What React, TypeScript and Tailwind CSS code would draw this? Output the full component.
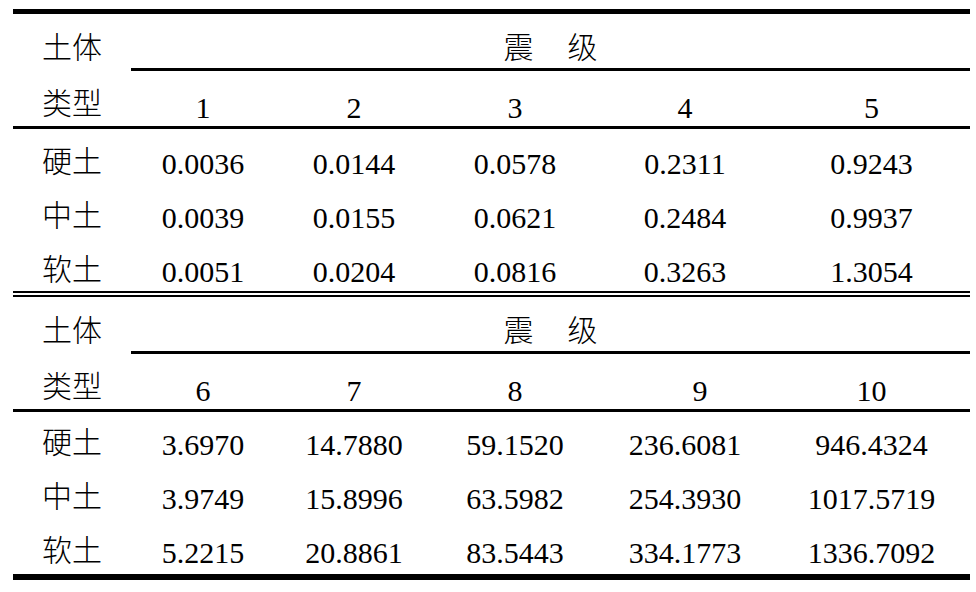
const font = { fontFamily: '"Liberation Serif", "Noto Sans CJK SC", serif' };

type Block = {
  heads: string[];
  rows: { label: string; values: string[] }[];
  headPad: string[];
  bodyTop: string;
  bodyBottom: string;
};

const blocks: Block[] = [
  {
    heads: ["1", "2", "3", "4", "5"],
    headPad: ["", "", "", "", ""],
    rows: [
      { label: "硬土", values: ["0.0036", "0.0144", "0.0578", "0.2311", "0.9243"] },
      { label: "中土", values: ["0.0039", "0.0155", "0.0621", "0.2484", "0.9937"] },
      { label: "软土", values: ["0.0051", "0.0204", "0.0816", "0.3263", "1.3054"] },
    ],
    bodyTop: "pt-[20px]",
    bodyBottom: "pb-[4px]",
  },
  {
    heads: ["6", "7", "8", "9", "10"],
    headPad: ["", "", "", "pl-[30px]", ""],
    rows: [
      { label: "硬土", values: ["3.6970", "14.7880", "59.1520", "236.6081", "946.4324"] },
      { label: "中土", values: ["3.9749", "15.8996", "63.5982", "254.3930", "1017.5719"] },
      { label: "软土", values: ["5.2215", "20.8861", "83.5443", "334.1773", "1336.7092"] },
    ],
    bodyTop: "pt-[18px]",
    bodyBottom: "pb-[6px]",
  },
];

const cols = "grid grid-cols-[118px_144px_158px_164px_176px_197px]";

function Section({ block }: { block: Block }) {
  return (
    <div>
      {/* header row: 土体 / 震 级 */}
      <div className={cols}>
        <div className="flex justify-center pt-[19px] h-[57px] leading-[30px] font-light">土体</div>
        <div className="col-span-5 flex justify-center gap-[34px] pt-[19px] h-[57px] leading-[30px] border-b-[3px] border-black font-light">
          <span>震</span>
          <span>级</span>
        </div>
      </div>
      {/* header row: 类型 / numbers */}
      <div className={`${cols} border-b-[3px] border-black`}>
        <div className="flex justify-center pt-[18px] h-[55px] leading-[30px] font-light">类型</div>
        {block.heads.map((h, i) => (
          <div key={h} className={`flex justify-center pt-[22px] h-[55px] leading-[30px] ${block.headPad[i]}`}>
            {h}
          </div>
        ))}
      </div>
      {/* data rows */}
      <div className={`flex flex-col gap-[24px] ${block.bodyTop} ${block.bodyBottom}`}>
        {block.rows.map((r) => (
          <div key={r.label} className={`${cols} h-[30px] leading-[30px]`}>
            <div className="flex justify-center -translate-y-[2px] font-light">{r.label}</div>
            {r.values.map((v, i) => (
              <div key={i} className="flex justify-center">
                {v}
              </div>
            ))}
          </div>
        ))}
      </div>
    </div>
  );
}

export default function App() {
  return (
    <div className="w-[976px] h-[592px] bg-white text-black text-[30px] pt-[9px] pl-[13px]" style={font}>
      <div className="w-[957px] border-t-[5px] border-black">
        <Section block={blocks[0]} />
        <div className="border-t-[6px] border-double border-black" />
        <Section block={blocks[1]} />
        <div className="border-t-[6px] border-black" />
      </div>
    </div>
  );
}
